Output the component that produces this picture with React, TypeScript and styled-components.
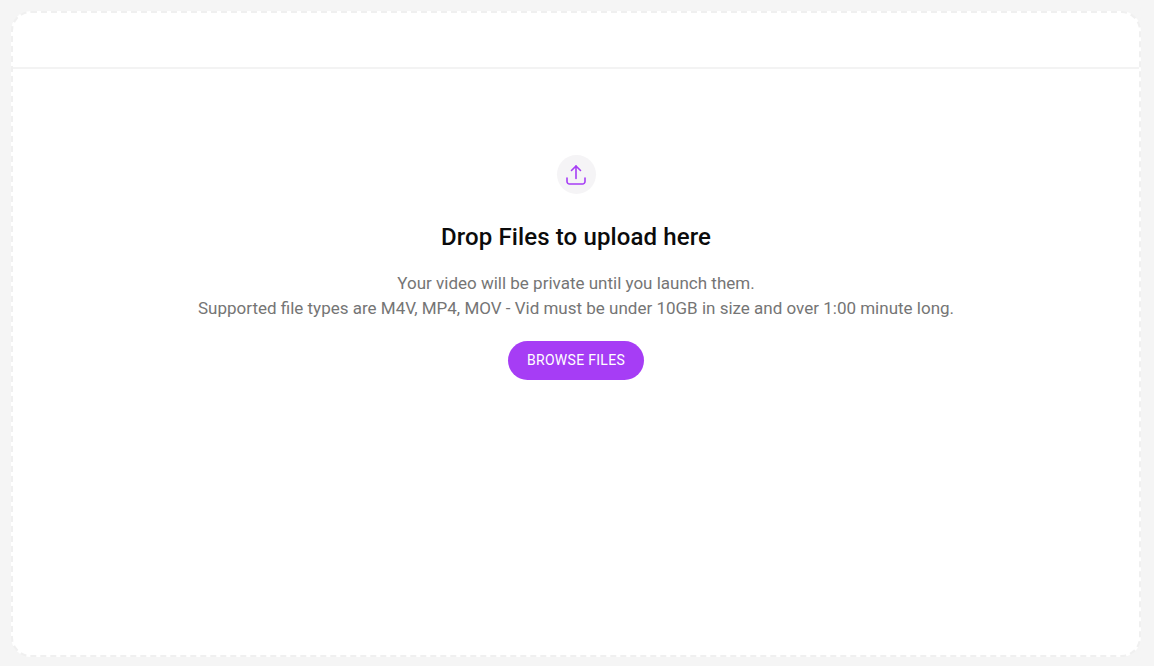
import React from 'react';
import styled, { createGlobalStyle } from 'styled-components';

const GlobalStyle = createGlobalStyle`
  html, body {
    margin: 0;
    padding: 0;
    height: 100%;
    background: #f5f5f5;
    font-family: Roboto, "Liberation Sans", sans-serif;
  }
  #root {
    height: 100%;
  }
`;

const Page = styled.div`
  box-sizing: border-box;
  height: 666px;
  padding: 11px 13px 9px 11px;
`;

const DropZone = styled.div`
  box-sizing: border-box;
  height: 100%;
  display: flex;
  flex-direction: column;
  background: #ffffff;
  border: 2px dashed #f0f0f0;
  border-radius: 20px;
`;

const ZoneHeader = styled.div`
  height: 54px;
  flex: none;
  border-bottom: 2px solid #f3f3f3;
`;

const ZoneBody = styled.div`
  flex: 1;
  display: flex;
  flex-direction: column;
  align-items: center;
  padding-top: 86px;
`;

const IconCircle = styled.div`
  width: 39px;
  height: 39px;
  border-radius: 50%;
  background: #f5f4f6;
  display: flex;
  align-items: center;
  justify-content: center;
`;

const Title = styled.h2`
  margin: 27px 0 0;
  font-size: 24px;
  line-height: 32px;
  font-weight: 500;
  letter-spacing: 0.12px;
  color: #0b0b0b;
`;

const Description = styled.p`
  margin: 18px 0 0;
  font-size: 17px;
  line-height: 25px;
  font-weight: 400;
  color: #757575;
  text-align: center;
`;

const BrowseButton = styled.button`
  margin-top: 20px;
  width: 136px;
  height: 39px;
  padding: 0 0 2px;
  border: none;
  border-radius: 20px;
  background: #a63df5;
  color: #ffffff;
  font-family: inherit;
  font-size: 14px;
  font-weight: 400;
  letter-spacing: 0.3px;
  cursor: pointer;
`;

const UploadIcon = () => (
  <svg width="24" height="24" viewBox="0 0 24 24" fill="none" stroke="#a63df5" strokeWidth="1.6" strokeLinecap="round" strokeLinejoin="round">
    <path d="M12 15.5V3" />
    <path d="M7.5 7.5L12 3l4.5 4.5" />
    <path d="M3 15v3.5a2.5 2.5 0 0 0 2.5 2.5h13a2.5 2.5 0 0 0 2.5-2.5V15" />
  </svg>
);

export default function App() {
  return (
    <>
      <GlobalStyle />
      <Page>
        <DropZone>
          <ZoneHeader />
          <ZoneBody>
            <IconCircle>
              <UploadIcon />
            </IconCircle>
            <Title>Drop Files to upload here</Title>
            <Description>
              Your video will be private until you launch them.
              <br />
              Supported file types are M4V, MP4, MOV - Vid must be under 10GB in size and over 1:00 minute long.
            </Description>
            <BrowseButton>BROWSE FILES</BrowseButton>
          </ZoneBody>
        </DropZone>
      </Page>
    </>
  );
}
